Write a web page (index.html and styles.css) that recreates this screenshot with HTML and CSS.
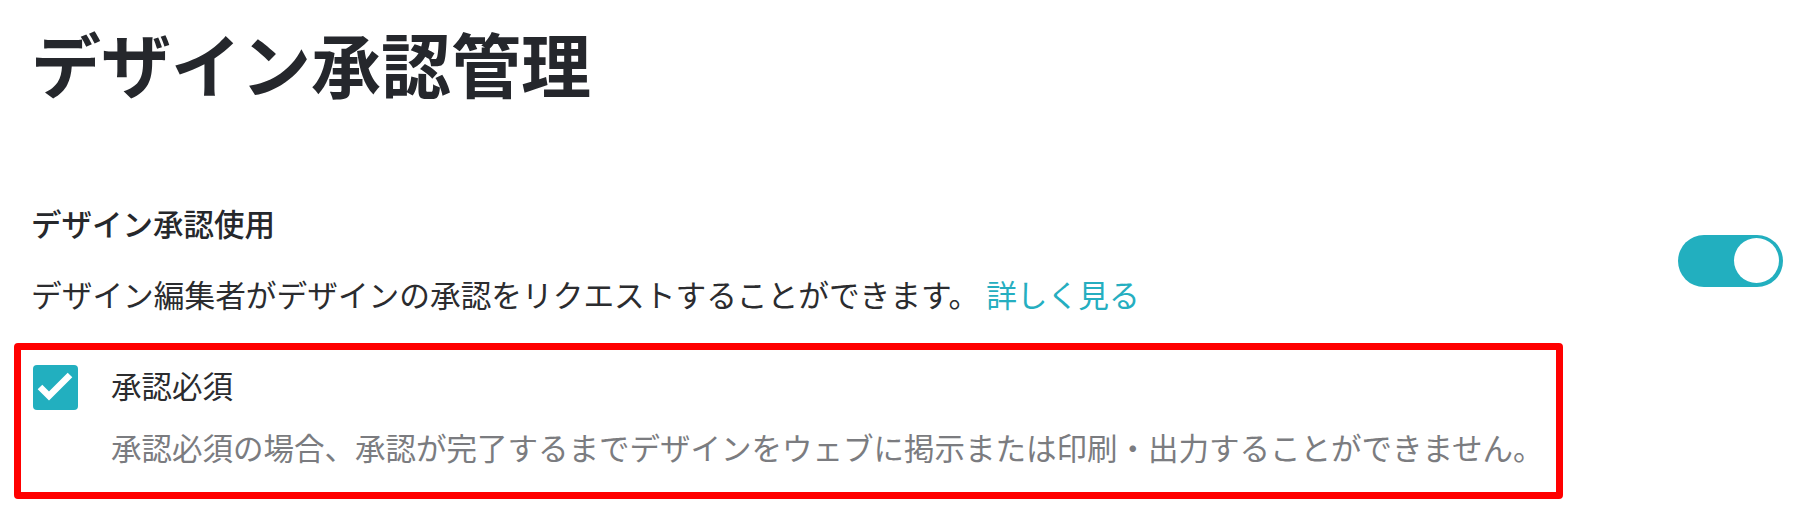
FILE: index.html
```html
<!DOCTYPE html>
<html lang="ja">
<head>
    <meta charset="UTF-8">
    <meta name="viewport" content="width=device-width, initial-scale=1.0">
    <title>デザイン承認管理</title>
    <link rel="stylesheet" href="styles.css">
</head>
<body>

    <div class="page">
        <!-- Page title -->
        <h1 class="page-title">デザイン承認管理</h1>

        <!-- Setting: use approval -->
        <div class="setting-row">
            <div class="setting-text">
                <h2 class="setting-title">デザイン承認使用</h2>
                <p class="setting-desc">デザイン編集者がデザインの承認をリクエストすることができます。 <a href="#" class="more-link">詳しく見る</a></p>
            </div>
            <label class="toggle">
                <input type="checkbox" checked>
                <span class="toggle-track"><span class="toggle-knob"></span></span>
            </label>
        </div>

        <!-- Option: approval required (highlighted) -->
        <div class="approval-option">
            <span class="check-box">
                <svg viewBox="0 0 45 45" width="45" height="45">
                    <polyline points="7,22 16,31 37,10" fill="none" stroke="#fff" stroke-width="6.5" />
                </svg>
            </span>
            <div class="option-text">
                <div class="option-title">承認必須</div>
                <div class="option-desc">承認必須の場合、承認が完了するまでデザインをウェブに掲示または印刷・出力することができません。</div>
            </div>
        </div>
    </div>

</body>
</html>
```

FILE: styles.css
```css
/* body */
body {
    margin: 0;
    padding: 0;
    background-color: #ffffff;
    font-family: "Noto Sans CJK JP", "Noto Sans", sans-serif;
    color: #2b2c2f;
}

/* Page */
.page {
    padding: 17px 37px 0 31px;
}

.page-title {
    margin: 0;
    font-size: 70px;
    line-height: 91px;
    font-weight: 700;
    color: #25272c;
}

/* Setting row */
.setting-row {
    display: flex;
    justify-content: space-between;
    align-items: center;
    margin-top: 95px;
}

.setting-title {
    margin: 0;
    font-size: 30.5px;
    line-height: 40px;
    font-weight: 500;
    color: #26282c;
}

.setting-desc {
    margin: 31px 0 0;
    font-size: 30.7px;
    line-height: 40px;
    font-weight: 400;
    color: #2b2c2f;
}

.more-link {
    color: #25aec0;
    text-decoration: none;
}

/* Toggle */
.toggle input {
    display: none;
}

.toggle-track {
    display: flex;
    justify-content: flex-end;
    align-items: center;
    width: 105px;
    height: 52px;
    padding: 0 4px;
    box-sizing: border-box;
    border-radius: 26px;
    background-color: #22afbf;
    margin-top: 4px;
}

.toggle-knob {
    width: 45px;
    height: 45px;
    border-radius: 50%;
    background-color: #ffffff;
}

/* Approval option */
.approval-option {
    display: flex;
    align-items: flex-start;
    gap: 33px;
    width: 1549px;
    box-sizing: border-box;
    margin: 29px 0 0 -17px;
    padding: 15px 12px 25px 12px;
    border: 7px solid #ff0000;
    border-radius: 4px;
}

.check-box {
    display: block;
    width: 45px;
    height: 45px;
    flex-shrink: 0;
    border-radius: 4px;
    background-color: #22afbf;
}

.check-box svg {
    display: block;
}

.option-title {
    font-size: 30.5px;
    line-height: 40px;
    color: #2b2c2f;
}

.option-desc {
    margin-top: 22px;
    font-size: 30.5px;
    line-height: 40px;
    color: #7b7c80;
}
```
